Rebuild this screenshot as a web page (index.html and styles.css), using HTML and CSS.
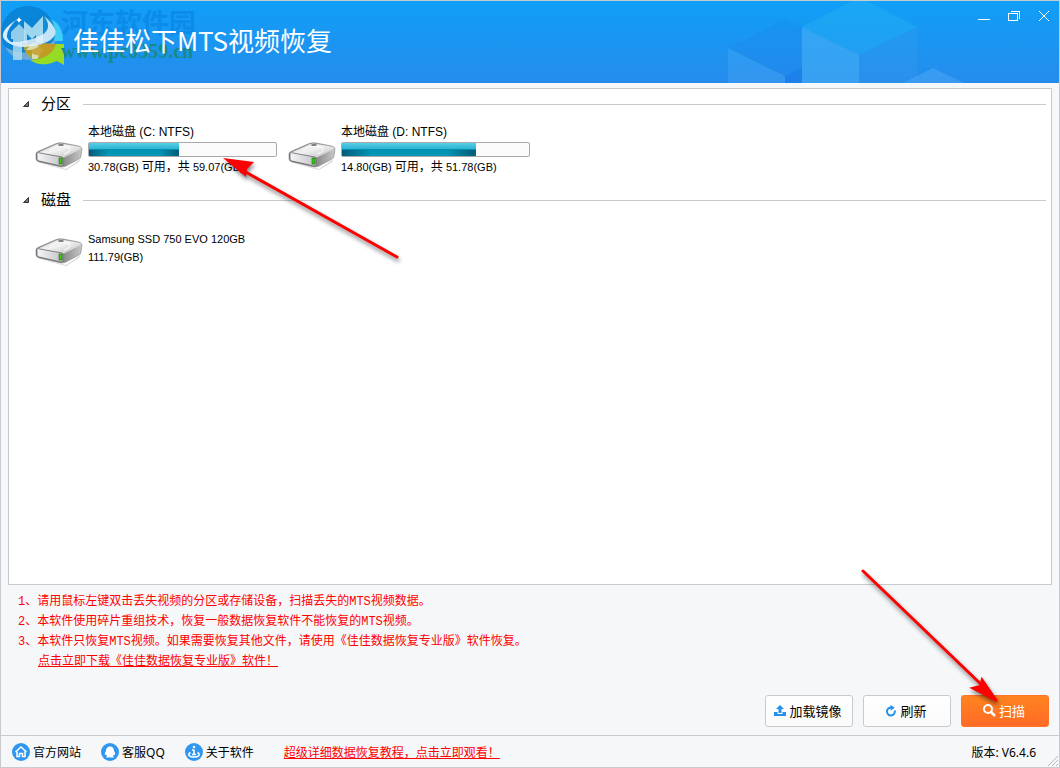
FILE: index.html
```html
<!DOCTYPE html>
<html lang="zh-CN">
<head>
<meta charset="utf-8">
<title>佳佳松下MTS视频恢复</title>
<link rel="stylesheet" href="styles.css">
</head>
<body>
<svg class="defs" width="0" height="0" aria-hidden="true">
  <defs>
    <linearGradient id="top" x1="0" y1="0" x2="1" y2="1"><stop offset="0" stop-color="#cfcfcf"/><stop offset=".45" stop-color="#f2f2f2"/><stop offset="1" stop-color="#bcbcbc"/></linearGradient>
    <linearGradient id="side" x1="0" y1="0" x2="1" y2="0"><stop offset="0" stop-color="#7c7c7c"/><stop offset=".6" stop-color="#8a8a8a"/><stop offset="1" stop-color="#c8c8c8"/></linearGradient>
    <linearGradient id="front" x1="0" y1="0" x2="1" y2="0"><stop offset="0" stop-color="#f4f4f8"/><stop offset="1" stop-color="#c2c2c8"/></linearGradient>
    <symbol id="disk" viewBox="0 0 48 28">
      <path d="M4 21 L31 27 L46 17 L44 20 L31 28 Z" fill="#bbb" opacity=".6"/>
      <path d="M1 12 Q1 10 4 9 L20 2 Q24 0 28 1 L44 4 Q47 5 47 7 L46 14 Q46 16 44 17 L31 24 Q29 25 26 25 L4 20 Q1 19 1 17 Z" fill="url(#side)" stroke="#888" stroke-width=".6"/>
      <path d="M2 11 L22 2 Q25 1 29 2 L45 5 Q47 6 44 8 L30 15 Q28 16 25 15 Z" fill="url(#top)"/>
      <path d="M15 8 Q24 1 34 6 Q38 9 29 12" fill="none" stroke="#fff" stroke-width="1"/>
      <ellipse cx="26" cy="3" rx="3" ry="1" fill="#777"/>
      <path d="M2 11 Q3 10 5 11 L27 15 Q28 16 28 17 V23 Q28 24 26 24 L4 19 Q2 19 2 17 Z" fill="url(#front)" stroke="#6b6b6b" stroke-width=".8"/>
      <rect x="24" y="16" width="3" height="6" fill="#35c916" stroke="#176b0b" stroke-width=".6"/>
    </symbol>
  </defs>
</svg>
<div class="window">
  <header class="titlebar">
    <svg class="cubes" width="340" height="83" viewBox="0 0 340 83" aria-hidden="true">
      <path d="M8 48 L65 19 L82 27 V68 L65 76 Z" fill="#1c7eea" opacity=".2"/>
      <path d="M8 48 L65 76 V83 H8 Z" fill="#55adf5" opacity=".3"/>
      <path d="M65 76 L82 68 V83 H65 Z" fill="#1873e8" opacity=".5"/>
      <path d="M82 27 L134 0 H145 L197 27 L139 55 Z" fill="#2bbcf2" opacity=".32"/>
      <path d="M82 27 L139 55 V83 H82 Z" fill="#5bbcf8" opacity=".4"/>
      <path d="M139 55 L197 27 V83 H139 Z" fill="#45a0ee" opacity=".2"/>
      <path d="M183 83 L213 68 L244 83 Z" fill="#5bb0f8" opacity=".4"/>
    </svg>
    <svg class="logo" width="66" height="68" viewBox="0 0 66 68" aria-hidden="true">
      <path d="M42 16 Q62 19 62 40 H36 Z" fill="#3ecdf8"/>
      <path d="M23 43 H63 V64 L56 60 Q38 68 27 57 Q23 51 23 43 Z" fill="#96dc24"/>
      <circle cx="27" cy="32" r="27" fill="#087fcf" opacity=".82"/>
      <path d="M4 46 Q28 60 54 39 Q54 57 28 59 Q11 59 4 46 Z" fill="#6eabd4"/>
      <path d="M22 43 H55 Q51 56 34 59 Q23 54 22 43 Z" fill="#b2a42d"/>
      <path d="M10 31 L18 23 L24 29 V42 H21 V59 H12 V38 H10 Z" fill="#acd8ef" opacity=".85"/>
      <path d="M23 20 L31 27 L42 15 V42 H35 V34 L31 38 L26 33 V42 H23 Z" fill="#b9e5f5" opacity=".85"/>
      <path d="M25 49 L33 41 L42 49 L36 58 H31 V49 Z" fill="#e9f2df" opacity=".7"/>
      <path d="M43 15 Q57 27 54 34 Q48 44 24 46 Q12 46 7 41 Q25 42 41 34 Q52 27 43 15 Z" fill="#e4f2fb" opacity=".85"/>
      <path d="M15 19 Q-2 30 3 38 Q9 46 24 45 Q8 43 6 36 Q5 29 15 19 Z" fill="#d5edfc"/>
      <path d="M43 42 Q35 49 23 50 L42 56 Q52 52 54 43 Z" fill="#c69a22" opacity=".8"/>
      <path d="M18 16 l1 2 2 1 -2 1 -1 2 -1 -2 -2 -1 2 -1 Z" fill="#fff"/>
    </svg>
    <h1 class="app-title">佳佳松下MTS视频恢复</h1>
    <div class="watermark"><span class="wm-name">河东软件园</span><span class="wm-url">www.pc0359.cn</span></div>
    <div class="controls">
      <button class="ctl" aria-label="最小化"><svg width="12" height="12" viewBox="0 0 12 12" shape-rendering="crispEdges"><path d="M0 9.5H12" stroke="#fff"/></svg></button>
      <button class="ctl" aria-label="还原"><svg width="12" height="12" viewBox="0 0 12 12" fill="none" stroke="#fff" shape-rendering="crispEdges"><path d="M.5 3.5h9v7h-9zM3 1.5h8.5V9"/></svg></button>
      <button class="ctl" aria-label="关闭"><svg width="12" height="12" viewBox="0 0 12 12"><path d="M1 1L11 11M11 1L1 11" stroke="#fff"/></svg></button>
    </div>
  </header>

  <main class="content">
    <div class="panel">
      <section class="group">
        <h2 class="group-title"><svg width="6" height="6" viewBox="0 0 6 6" aria-hidden="true"><path d="M5.500 .5V5.500H.5Z" fill="#777" stroke="#333"/></svg><span>分区</span></h2>
        <div class="volumes">
          <article class="volume">
            <svg class="disk" width="48" height="28"><use href="#disk"/></svg>
            <div class="info">
              <span class="name">本地磁盘 (C: NTFS)</span>
              <div class="bar" role="img" aria-label="已用空间"><div class="fill" style="width:48%"></div></div>
              <span class="size">30.78(GB) <span class="cjk">可用，共</span> 59.07(GB)</span>
            </div>
          </article>
          <article class="volume">
            <svg class="disk" width="48" height="28"><use href="#disk"/></svg>
            <div class="info">
              <span class="name">本地磁盘 (D: NTFS)</span>
              <div class="bar" role="img" aria-label="已用空间"><div class="fill" style="width:71.4%"></div></div>
              <span class="size">14.80(GB) <span class="cjk">可用，共</span> 51.78(GB)</span>
            </div>
          </article>
        </div>
      </section>
      <section class="group">
        <h2 class="group-title"><svg width="6" height="6" viewBox="0 0 6 6" aria-hidden="true"><path d="M5.500 .5V5.500H.5Z" fill="#777" stroke="#333"/></svg><span>磁盘</span></h2>
        <div class="volumes physical">
          <article class="volume">
            <svg class="disk" width="48" height="28"><use href="#disk"/></svg>
            <div class="info">
              <span class="size">Samsung SSD 750 EVO 120GB</span>
              <span class="size">111.79(GB)</span>
            </div>
          </article>
        </div>
      </section>
    </div>

    <div class="tips">
      <p>1、请用鼠标左键双击丢失视频的分区或存储设备，扫描丢失的MTS视频数据。</p>
      <p>2、本软件使用碎片重组技术，恢复一般数据恢复软件不能恢复的MTS视频。</p>
      <p>3、本软件只恢复MTS视频。如果需要恢复其他文件，请使用《佳佳数据恢复专业版》软件恢复。</p>
      <p class="more"><a href="#">点击立即下载《佳佳数据恢复专业版》软件！</a></p>
    </div>

    <div class="actions">
      <button class="btn"><svg width="12" height="12" viewBox="0 0 12 12" fill="#2490ee" aria-hidden="true"><path d="M6 0L10 4H7.500V8H4.500V4H2Z"/><path d="M0 7H3.500V9H8.500V7H12V11H0Z"/></svg>加载镜像</button>
      <button class="btn"><svg width="12" height="12" viewBox="0 0 12 12" aria-hidden="true"><path d="M6.500 2.500A4 4 0 1 0 9.800 5.500" fill="none" stroke="#2490ee" stroke-width="2"/><path d="M5.500 0L9.800 2.800L5.500 5.600Z" fill="#2490ee"/></svg>刷新</button>
      <button class="btn primary"><svg width="13" height="13" viewBox="0 0 13 13" fill="none" stroke="#fff" aria-hidden="true"><circle cx="5" cy="5" r="4" stroke-width="2"/><path d="M8 8L12 12" stroke-width="2.500"/></svg>扫描</button>
    </div>
  </main>

  <footer class="footer">
    <a class="nav" href="#"><svg width="18" height="18" viewBox="0 0 18 18" aria-hidden="true"><circle cx="9" cy="9" r="9" fill="#2f97f0"/><path d="M3.500 9L9 4L14.500 9M5 8.500V13.500H7.500V10.500H10.500V13.500H13V8.500" fill="none" stroke="#fff" stroke-width="1.500"/></svg>官方网站</a>
    <a class="nav" href="#"><svg width="18" height="18" viewBox="0 0 18 18" aria-hidden="true"><circle cx="9" cy="9" r="9" fill="#2f97f0"/><path d="M9 3.500C6 3.500 5 6 5 8C4 9.500 3.500 11 4 12L5 11.500L6 13L5 14.500H8.500L9 14L9.500 14.500H13L12 13L13 11.500L14 12C14.500 11 14 9.500 13 8C13 6 12 3.500 9 3.500Z" fill="#fff"/></svg>客服QQ</a>
    <a class="nav" href="#"><svg width="18" height="18" viewBox="0 0 18 18" aria-hidden="true"><circle cx="9" cy="9" r="9" fill="#2f97f0"/><circle cx="9" cy="4" r="1.300" fill="#fff"/><path d="M9 6.500V11.500M7 7H9M7 11.500H11" stroke="#fff" stroke-width="1.600"/><path d="M5.500 9.500C1.500 12 5 14 9 14S16.500 12 12.500 9.500" fill="none" stroke="#fff" stroke-width="1.500"/></svg>关于软件</a>
    <a class="tutorial" href="#">超级详细数据恢复教程，点击立即观看！</a>
    <span class="version">版本: V6.4.6</span>
    <svg class="grip" width="10" height="10" viewBox="0 0 10 10" stroke="#b4b6ba" stroke-width="1" aria-hidden="true"><path d="M0 10L10 0M4 10L10 4M8 10L10 8"/></svg>
  </footer>

  <svg class="arrow arrow-volume" width="190" height="120" viewBox="0 0 190 120" aria-hidden="true">
    <path d="M24 18L186 109" stroke="#f00" stroke-width="3" stroke-linecap="round"/>
    <path d="M12 10L43 14L36 21L35 29Z" fill="#f00"/>
  </svg>
  <svg class="arrow arrow-scan" width="160" height="150" viewBox="0 0 160 150" aria-hidden="true">
    <path d="M10 11L134 130" stroke="#f00" stroke-width="3" stroke-linecap="round"/>
    <path d="M144 141L119 128L127 126L129 119Z" fill="#f00" stroke="#f00" stroke-width="2"/>
  </svg>
</div>
</body>
</html>
```
FILE: styles.css
```css
* { box-sizing: border-box; }

body {
  margin: 0;
  font-family: "Liberation Sans", "Noto Sans CJK SC", sans-serif;
  font-size: 12px;
  color: #000;
}

h1, h2, p { margin: 0; font-weight: 400; }

svg { flex: none; }
.defs { position: absolute; }

.window {
  position: relative;
  display: flex;
  flex-direction: column;
  min-height: 100vh;
  border: 1px solid #c8cacf;
  background: #f6f7f9;
  overflow: hidden;
}

.titlebar {
  position: relative;
  display: flex;
  align-items: flex-start;
  height: 82px;
  background: linear-gradient(#109ff7, #258cec);
}

.cubes { position: absolute; right: -1px; top: -1px; }

.logo { position: relative; }

.app-title {
  position: relative;
  z-index: 1;
  padding: 19px 0 0 6px;
  font-family: "Noto Sans CJK SC", sans-serif;
  font-size: 26px;
  font-weight: 400;
  line-height: 40px;
  color: #fff;
  white-space: nowrap;
}

.watermark {
  position: absolute;
  left: 60px;
  top: 8px;
  display: flex;
  flex-direction: column;
  font-family: "Liberation Serif", "Noto Sans CJK SC", serif;
  font-weight: 700;
}
.wm-name { font-size: 27px; line-height: 30px; color: #0b8bea; }
.wm-url { font-size: 20px; line-height: 24px; color: #168b86; }

.controls {
  position: relative;
  display: flex;
  gap: 18px;
  margin-left: auto;
  padding: 9px 9px 0 0;
}
.ctl {
  display: flex;
  padding: 0;
  border: 0;
  background: none;
}

.content {
  flex: 1;
  display: flex;
  flex-direction: column;
  padding: 5px 7px 8px;
}

.panel {
  flex: 1;
  padding: 5px 5px 0 14px;
  border: 1px solid #c8cacf;
  background: #fff;
}

.group-title {
  display: flex;
  align-items: center;
  gap: 12px;
  height: 20px;
  font-family: "Noto Sans CJK SC", sans-serif;
  font-size: 15px;
  line-height: 20px;
}
.group-title span { padding-bottom: 3px; }
.group-title::after {
  content: "";
  flex: 1;
  height: 1px;
  background: #c8cacf;
}

.volumes {
  display: flex;
  flex-wrap: wrap;
  gap: 12px;
  padding: 9px 0 14px 12px;
}
.physical { padding-top: 20px; }

.volume { display: flex; gap: 5px; }
.volume + .volume { margin-left: -1px; }
.disk { margin-top: 19px; }
.physical .disk { margin-top: 8px; }

.info {
  display: flex;
  flex-direction: column;
  width: 189px;
}
.name { line-height: 18px; }
.size { font-size: 11px; line-height: 18px; white-space: nowrap; }
.cjk { font-size: 12px; }

.bar {
  height: 15px;
  margin: 1px 0;
  padding: 0;
  border: 1px solid #a9a9ab;
  border-radius: 2px;
  background: #fafafa;
}
.fill {
  height: 100%;
  background:
    linear-gradient(90deg, rgba(0, 50, 75, .6), transparent 22%, transparent 78%, rgba(0, 50, 75, .6)) bottom / 100% 50% no-repeat,
    linear-gradient(#57cfe9, #2fb2d0 45%, #0092b2 50%, #0899b8);
}

.tips {
  padding: 7px 10px 0;
  font-family: "Liberation Mono", "Noto Sans CJK SC", monospace;
  line-height: 20px;
  color: #f00;
}
.more { padding-left: 20px; }
.tips a, .tutorial { color: #f00; text-decoration: underline; }

.actions {
  display: flex;
  justify-content: flex-end;
  gap: 10px;
  padding: 23px 3px 0 0;
}
.btn {
  display: flex;
  align-items: center;
  justify-content: center;
  gap: 3px;
  width: 88px;
  height: 32px;
  padding: 0 2px 1px 0;
  border: 1px solid #c8cacf;
  border-radius: 3px;
  background: linear-gradient(#fff, #fafafa);
  font-family: "Noto Sans CJK SC", sans-serif;
  font-size: 13px;
  line-height: 20px;
  color: #000;
}
.btn.primary {
  border-color: #ff7425;
  background: linear-gradient(#ff8420, #ff6a26);
  color: #fff;
}

.footer {
  position: relative;
  display: flex;
  align-items: center;
  height: 32px;
  padding: 0 23px 0 11px;
  border-top: 1px solid #c8cacf;
  font-family: "Noto Sans", "Noto Sans CJK SC", sans-serif;
}
.nav {
  display: flex;
  align-items: center;
  gap: 3px;
  margin-right: 20px;
  color: #000;
  text-decoration: none;
}
.tutorial { margin-left: 10px; }
.version { margin-left: auto; }
.grip { position: absolute; right: 1px; bottom: 1px; }

.arrow {
  position: absolute;
  z-index: 2;
  pointer-events: none;
  filter: drop-shadow(1px 3px 2px rgba(0, 0, 0, .5));
}
.arrow-volume { left: 210px; top: 147px; }
.arrow-scan { right: 46px; bottom: 57px; }
```
